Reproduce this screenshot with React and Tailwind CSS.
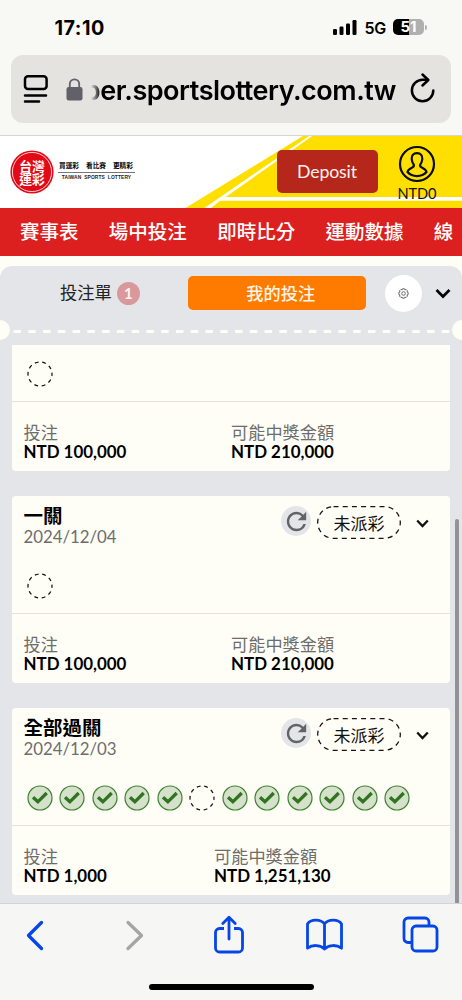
const CJK = "font-['Lato','Noto_Sans_CJK_TC',sans-serif]";

function PendingDot() {
  return (
    <svg className="size-[26px] shrink-0" viewBox="0 0 26 26" fill="none">
      <circle cx="13" cy="13" r="12" stroke="#111" strokeWidth="1.25" strokeDasharray="3.8 3.74" strokeDashoffset="1.9" />
    </svg>
  );
}

function WonDot() {
  return (
    <svg className="size-[26px] shrink-0" viewBox="0 0 26 26" fill="none">
      <circle cx="13" cy="13" r="12" fill="#d6e1cb" stroke="#3d8430" strokeWidth="1.2" />
      <path d="M6 12.2 10.9 16.8 19.7 8" stroke="#2f751f" strokeWidth="3.3" />
    </svg>
  );
}

function CardHead({ title, date }) {
  return (
    <div className="flex h-[65px] justify-between pl-[11.5px] pr-[20px]">
      <div className="pt-[8.5px]">
        <div className="h-[23px] text-[19.5px] leading-[23px] font-bold text-black">{title}</div>
        <div className="h-[19px] text-[16.8px] leading-[19px] text-[#6d6d6b]">{date}</div>
      </div>
      <div className="mt-[10.5px] flex h-[33px] items-center">
        <div className="mb-[3px] flex size-[30px] items-center justify-center rounded-full bg-[#e4e5e8]">
          <svg className="size-[29px]" viewBox="0 0 24 24" fill="#626366">
            <path d="M17.65 6.35A7.958 7.958 0 0 0 12 4c-4.42 0-7.99 3.58-7.99 8s3.57 8 7.99 8c3.73 0 6.84-2.55 7.73-6h-2.08A5.99 5.99 0 0 1 12 18c-3.31 0-6-2.69-6-6s2.69-6 6-6c1.66 0 3.14.69 4.22 1.78L13 11h7V4l-2.35 2.35z" />
          </svg>
        </div>
        <div className="relative ml-[6px] flex h-[33px] w-[84px] items-center justify-center">
          <svg className="absolute inset-0 size-full" viewBox="0 0 84 33" fill="none">
            <rect x="0.7" y="0.7" width="82.6" height="31.6" rx="15.8" stroke="#151515" strokeWidth="1.3" strokeDasharray="5 4.2" />
          </svg>
          <span className="pt-[2px] text-[17px] leading-[31px] text-[#111]">未派彩</span>
        </div>
        <svg className="mt-[1px] mr-[1px] ml-[14.5px] h-[9px] w-[13px]" viewBox="0 0 13 9" fill="none">
          <path d="M1.2 1.5 6.5 7 11.8 1.5" stroke="#111" strokeWidth="2.3" />
        </svg>
      </div>
    </div>
  );
}

function Amounts({ stake, payout, narrow }) {
  return (
    <div className="flex h-[69px] border-t border-[#e6e2db] pl-[11.5px] pt-[21px]">
      <div className={narrow ? "w-[190.5px]" : "w-[207.5px]"}>
        <div className="h-[19px] text-[17.2px] leading-[19px] text-[#6d6d6b]">投注</div>
        <div className="h-[19px] text-[16.9px] leading-[20px] font-bold text-black">{stake}</div>
      </div>
      <div>
        <div className="h-[19px] text-[17.2px] leading-[19px] text-[#6d6d6b]">可能中獎金額</div>
        <div className="h-[19px] text-[16.9px] leading-[20px] font-bold text-black">{payout}</div>
      </div>
    </div>
  );
}

function StatusBar() {
  return (
    <div className="flex h-[55px] items-start justify-between pl-[54.5px] pr-[35px] pt-[16px] text-black">
      <div className="text-[19.8px] leading-[24px] font-bold tracking-[0.5px]">17:10</div>
      <div className="flex h-[22px] items-center">
        <svg className="h-[15px] w-[24px]" viewBox="0 0 24 15">
          <rect x="0" y="9" width="4" height="6" rx="1.2" />
          <rect x="6.5" y="6.5" width="4" height="8.5" rx="1.2" />
          <rect x="13" y="3.5" width="4" height="11.5" rx="1.2" />
          <rect x="19.5" y="0" width="4" height="15" rx="1.2" />
        </svg>
        <span className="ml-[8px] w-[21px] pt-[1px] text-[16px] leading-[22px] font-semibold tracking-[-0.2px]">5G</span>
        <div className="ml-[7.5px] flex h-[16px] w-[31px] items-center justify-center rounded-[5px] bg-[linear-gradient(90deg,#000_51%,#b0b0ae_51%)] text-[15px] leading-[16px] font-bold text-white">51</div>
        <div className="ml-[1px] h-[5px] w-[2px] rounded-r-full bg-[#b0b0ae]" />
      </div>
    </div>
  );
}

function AddressBar() {
  return (
    <div className="mx-[11px] flex h-[68px] w-[440px] items-center rounded-[12px] bg-[#e4e3e0] pl-[12px]">
      <svg className="size-[28px] shrink-0" viewBox="0 0 28 28" fill="none" stroke="#000" strokeWidth="2.5" strokeLinecap="round">
        <rect x="2" y="1.3" width="21.6" height="12.6" rx="3" />
        <path d="M2 20.5H23M2 26.6H16" />
      </svg>
      <svg className="ml-[14.5px] h-[23px] w-[17px] shrink-0" viewBox="0 0 17 23" fill="none">
        <rect x="0.5" y="9" width="16" height="13.5" rx="2.2" fill="#626068" />
        <path d="M3.8 10V6A4.7 4.7 0 0 1 13.2 6V10" stroke="#626068" strokeWidth="1.8" />
      </svg>
      <div className="mt-[3px] ml-[8px] flex h-[40px] w-[305.5px] shrink-0 justify-end overflow-hidden text-[27px] leading-[40px] font-semibold text-black [mask-image:linear-gradient(90deg,transparent,#000_10px)]">
        <span className="whitespace-nowrap tracking-[-0.48px]">ber.sportslottery.com.tw</span>
      </div>
      <svg className="mb-[2px] ml-[14px] h-[30px] w-[25px] shrink-0" viewBox="0 0 25 30" fill="none" stroke="#000" strokeWidth="2.5" strokeLinecap="round" strokeLinejoin="round">
        <path d="M23.3 17.5A10.7 10.7 0 1 1 12.6 6.8H17.5" />
        <path d="M12.5 1.5 18.3 7 12.5 12.5" />
      </svg>
    </div>
  );
}

function SiteHeader() {
  return (
    <header className="relative h-[73px] shrink-0 border-t border-[#d6d6d3] bg-white">
      <svg className="absolute inset-0 h-[72px] w-[462px]" viewBox="0 136 462 72" preserveAspectRatio="none">
        <path d="M185.5 208 303 136H462V208Z" fill="#ffdf00" />
        <path d="M204.5 208 309 136H312.3L225.7 197H462V200.7H220.3L211 208Z" fill="#fff" />
      </svg>
      <div className="relative flex h-[72px]">
        <svg className="mt-[13.5px] ml-[9.5px] size-[44px]" viewBox="0 0 44 44">
          <circle cx="22" cy="22" r="21.6" fill="#e30a17" />
          <circle cx="22" cy="22" r="19.6" fill="none" stroke="#fff" strokeWidth="0.8" />
          <g fill="#fff" fontFamily="'Noto Sans CJK TC', sans-serif" fontWeight="700" fontSize="12.8" textAnchor="middle">
            <text x="22" y="20.6">台灣</text>
            <text x="22" y="33.6">運彩</text>
          </g>
        </svg>
        <div className="mt-[22px] ml-[4.5px] w-[77px] text-black">
          <div className="flex h-[12px] justify-between pr-[2px] pl-[1px] text-[6.7px] leading-[14px] font-bold">
            <span>買運彩</span>
            <span>看比賽</span>
            <span>更精彩</span>
          </div>
          <div className="mt-[1.5px] h-px bg-[#777]" />
          <div className="text-center font-['Liberation_Sans',sans-serif] text-[4.9px] leading-[9px] font-bold tracking-[0.1px] whitespace-nowrap text-[#222]">TAIWAN&nbsp; SPORTS&nbsp; LOTTERY</div>
        </div>
        <button className="mt-[14px] ml-[141.5px] h-[43px] w-[101px] rounded-[5px] bg-[#b5261b] pt-[1px] text-[17.7px] leading-[42px] tracking-[-0.15px] text-[#fff3ef]">Deposit</button>
        <div className="mt-[8.5px] ml-[18px] flex w-[42px] flex-col items-center">
          <svg className="size-[38px] shrink-0" viewBox="0 0 38 38" fill="none" stroke="#0b0b00" strokeWidth="2.2">
            <circle cx="19" cy="19" r="17" />
            <path d="M19 8.2c-3.8 0-5.6 2.5-5.3 5.8.2 2.5 1 4.3 2.1 5.7.6 1.8-.5 2.5-2.4 3.3-2.3 1-3.6 2-3.9 4.1 2.2 2.5 5.4 4 9.5 4s7.3-1.5 9.5-4c-.3-2.1-1.6-3.1-3.9-4.1-1.9-.8-3-1.5-2.4-3.3 1.1-1.4 1.9-3.2 2.1-5.7.3-3.3-1.5-5.8-5.3-5.8Z" />
          </svg>
          <span className="mt-[2.5px] ml-[1px] text-[14.6px] leading-[18px] tracking-[-0.1px] text-[#111]">NTD0</span>
        </div>
      </div>
    </header>
  );
}

export default function App() {
  return (
    <div className={`flex h-[1000px] w-[462px] flex-col overflow-hidden bg-[#fffef6] ${CJK}`}>
      <div className="h-[135px] shrink-0 bg-[#f8f8f5] font-['Inter',sans-serif]">
        <StatusBar />
        <AddressBar />
      </div>
      <SiteHeader />
      <nav className="flex h-[48px] shrink-0 gap-[30.3px] overflow-hidden bg-[#dc1f1f] pl-[20px] text-[19.5px] leading-[48px] font-medium whitespace-nowrap text-white">
        <span>賽事表</span>
        <span>場中投注</span>
        <span>即時比分</span>
        <span>運動數據</span>
        <span>線</span>
      </nav>
      <main className="relative mt-[10px] flex h-[637px] shrink-0 flex-col rounded-t-[12px] bg-[#e4e5e8]">
        <div className="flex h-[54px] items-center">
          <div className="flex w-[188px] items-center pl-[60px]">
            <span className="text-[17.3px] leading-[34px] text-[#222]">投注單</span>
            <span className="ml-[5px] flex size-[23px] items-center justify-center rounded-full bg-[#d9999c] text-[15px] font-bold text-[#fff3f0]">1</span>
          </div>
          <button className="h-[34px] w-[177.5px] rounded-[5px] bg-[#ff7b00] pt-[1px] pl-[8px] text-[17.2px] leading-[33px] font-medium text-[#fff6e8]">我的投注</button>
          <div className="ml-[19.5px] flex size-[37px] items-center justify-center rounded-full bg-white">
            <svg className="size-[11px]" viewBox="0 0 22 22" fill="none" stroke="#555" strokeWidth="1.7">
              <path d="M9 1.5h4l.8 2.4 2.3-1.1 2.9 2.9-1.1 2.3 2.4.8v4.2l-2.4.8 1.1 2.4-2.9 2.9-2.3-1.1-.8 2.4H9l-.8-2.4-2.3 1.1L3 16.2l1.1-2.4L1.7 13V8.8L4.1 8 3 5.7l2.9-2.9 2.3 1.1Z" />
              <circle cx="11" cy="11" r="3.6" />
            </svg>
          </div>
          <svg className="mt-[1px] ml-[13px] h-[11px] w-[16px]" viewBox="0 0 16 11" fill="none">
            <path d="M1.5 2 8 8.5 14.5 2" stroke="#000" strokeWidth="2.7" />
          </svg>
        </div>
        <div className="flex h-[20px] w-[462px] items-center justify-between overflow-hidden">
          <div className="-ml-[10px] size-[20px] shrink-0 rounded-full bg-[#fffef6]" />
          <svg className="mt-[3px] h-[3px] w-[437px]" viewBox="0 0 437 3">
            <path d="M0.5 1.5H437" stroke="#fffef6" strokeWidth="2.8" strokeDasharray="7.5 7.27" />
          </svg>
          <div className="-mr-[10px] size-[20px] shrink-0 rounded-full bg-[#fffef6]" />
        </div>
        <div className="mt-[5px] ml-[12px] flex w-[437.5px] flex-col">
          <section className="h-[126px] rounded-b-[4px] bg-[#fffef6]">
            <div className="h-[56px] pt-[15.5px] pl-[14.5px]"><PendingDot /></div>
            <Amounts stake="NTD 100,000" payout="NTD 210,000" />
          </section>
          <section className="mt-[24.5px] h-[187.5px] rounded-[4px] bg-[#fffef6]">
            <CardHead title="一關" date="2024/12/04" />
            <div className="h-[52.5px] pt-[12px] pl-[14.5px]"><PendingDot /></div>
            <Amounts stake="NTD 100,000" payout="NTD 210,000" />
          </section>
          <section className="mt-[24.5px] h-[187.5px] rounded-[4px] bg-[#fffef6]">
            <CardHead title="全部過關" date="2024/12/03" />
            <div className="flex h-[52.5px] gap-[6.5px] pt-[12px] pl-[14.5px]">
              {Array.from({ length: 12 }, (_, i) => (i === 5 ? <PendingDot key={i} /> : <WonDot key={i} />))}
            </div>
            <Amounts stake="NTD 1,000" payout="NTD 1,251,130" narrow />
          </section>
        </div>
        <div className="absolute top-[253px] right-[3px] bottom-0 w-[4px] rounded-t-full bg-[#929395]" />
      </main>
      <footer className="flex h-[97px] shrink-0 flex-col items-center border-t border-[#d5d5d5] bg-[#f6f6f5]">
        <div className="flex h-[62px] w-full items-center pl-[25px]">
          <svg className="h-[31px] w-[20px]" viewBox="0 0 20 31" fill="none" stroke="#0646e6" strokeWidth="3.3" strokeLinecap="round" strokeLinejoin="round">
            <path d="M16.5 2.5 3.5 15.5 16.5 28.5" />
          </svg>
          <svg className="ml-[79px] h-[31px] w-[20px]" viewBox="0 0 20 31" fill="none" stroke="#a5a5a5" strokeWidth="3.3" strokeLinecap="round" strokeLinejoin="round">
            <path d="M4 2.5 17.5 15.5 4 28.5" />
          </svg>
          <svg className="mb-[2px] ml-[69px] h-[39px] w-[32px]" viewBox="0 0 32 39" fill="none" stroke="#0646e6" strokeWidth="2.8" strokeLinecap="round" strokeLinejoin="round">
            <path d="M11 13.5H6.5A4 4 0 0 0 2.5 17.5V33A4 4 0 0 0 6.5 37H25.5A4 4 0 0 0 29.5 33V17.5A4 4 0 0 0 25.5 13.5H21" strokeLinecap="butt" />
            <path d="M16 24V2.5M9.8 8.5 16 2.3 22.2 8.5" />
          </svg>
          <svg className="mb-[2px] ml-[60px] h-[33px] w-[39px]" viewBox="0 0 39 33" fill="none" stroke="#0646e6" strokeWidth="2.8" strokeLinecap="round" strokeLinejoin="round">
            <path d="M19.5 6C16 .8 5.5.8 2.5 6V30.2C7.5 26.5 15 26.5 19.5 31 24 26.5 31.5 26.5 36.5 30.2V6C33.5.8 23 .8 19.5 6V31" />
          </svg>
          <svg className="mb-[2px] ml-[57.5px] size-[37px]" viewBox="0 0 37 37" fill="none" stroke="#0646e6" strokeWidth="2.8">
            <path d="M9.5 26.5H6A4 4 0 0 1 2 22.5V6A4 4 0 0 1 6 2H23A4 4 0 0 1 27 6V9.5" />
            <rect x="10" y="10" width="25" height="25" rx="4" />
          </svg>
        </div>
        <div className="mt-[18px] h-[6px] w-[165px] rounded-full bg-black" />
      </footer>
    </div>
  );
}
